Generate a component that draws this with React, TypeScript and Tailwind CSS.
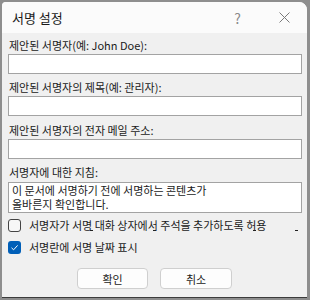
import React from 'react';

const font = { fontFamily: '"Noto Sans CJK KR", "Liberation Sans", sans-serif' };

function Field({ label, top }: { label: string; top: string }) {
  return (
    <div className={top}>
      <div className="h-4 text-[11px] leading-4 text-[#1a1a1a] pl-[1px]">{label}</div>
      <div className="mt-[1px] h-[20px] bg-white border border-[#a3a3a3]" />
    </div>
  );
}

export default function App() {
  return (
    <div className="w-[310px] h-[300px] bg-[#8e8e8e] pt-[2px] pl-[2px] pr-[3px] pb-[2px]" style={font}>
      <div className="h-full flex flex-col bg-[#f0f0f0] rounded-tl-[4px] rounded-tr-[8px] overflow-hidden border-b border-[#3b3b3b]">
        {/* title bar */}
        <div className="h-[31px] shrink-0 bg-[#fbfbfb] flex items-center pl-[10px] pr-[14px]">
          <span className="text-[13px] text-[#1a1a1a] leading-5">서명 설정</span>
          <span className="ml-auto text-[14px] text-[#8a8a8a] leading-5 mr-[38px]">?</span>
          <svg width="11" height="11" viewBox="0 0 11 11" className="mr-[3px]">
            <path d="M0.5 0.5 L10.5 10.5 M10.5 0.5 L0.5 10.5" stroke="#7a7a7a" strokeWidth="1" />
          </svg>
        </div>

        <div className="flex-1 pl-[6px] pr-[5px]">
          <Field label="제안된 서명자(예: John Doe):" top="mt-[4px]" />
          <Field label="제안된 서명자의 제목(예: 관리자):" top="mt-[5px]" />
          <Field label="제안된 서명자의 전자 메일 주소:" top="mt-[6px]" />

          <div className="mt-[5px]">
            <div className="h-4 text-[11px] leading-4 text-[#1a1a1a] pl-[1px]">서명자에 대한 지침:</div>
            <div className="mt-[2px] h-[31px] bg-white border border-[#a3a3a3] px-[3px] text-[11px] leading-[14px] text-[#1a1a1a]">
              <div>이 문서에 서명하기 전에 서명하는 콘텐츠가</div>
              <div>올바른지 확인합니다.</div>
            </div>
          </div>

          <div className="relative mt-[6px] flex items-center h-[13px]">
            <div className="w-[13px] h-[13px] rounded-[3px] border border-[#444] bg-[#f7f7f7]" />
            <span className="ml-[8px] text-[11px] leading-[13px] text-[#1a1a1a]">서명자가 서명 대화 상자에서 주석을 추가하도록 허용</span>
            <span className="absolute left-[82px] top-[11px] w-[3px] h-[1px] bg-[#222]" />
            <span className="absolute left-[145px] top-[11px] w-[3px] h-[1px] bg-[#222]" />
            <span className="absolute left-[245px] top-[11px] w-[3px] h-[1px] bg-[#222]" />
            <span className="absolute left-[287px] top-[11px] w-[3px] h-[1px] bg-[#222]" />
          </div>

          <div className="mt-[9px] flex items-center h-[13px]">
            <div className="w-[13px] h-[13px] rounded-[3px] bg-[#005fb8] flex items-center justify-center">
              <svg width="9" height="9" viewBox="0 0 9 9">
                <path d="M1.5 4.8 L3.6 6.8 L7.6 2.4" stroke="white" strokeWidth="1" fill="none" />
              </svg>
            </div>
            <span className="ml-[8px] text-[11px] leading-[13px] text-[#1a1a1a]">서명란에 서명 날짜 표시</span>
          </div>

          <div className="mt-[14px] flex justify-center gap-[12px] pr-[1px]">
            <button className="w-[71px] h-[21px] bg-[#fdfdfd] border border-[#cfcfcf] rounded-[4px] text-[11px] leading-4 text-[#1a1a1a]">확인</button>
            <button className="w-[72px] h-[21px] bg-[#fdfdfd] border border-[#cfcfcf] rounded-[4px] text-[11px] leading-4 text-[#1a1a1a]">취소</button>
          </div>
        </div>
      </div>
    </div>
  );
}
